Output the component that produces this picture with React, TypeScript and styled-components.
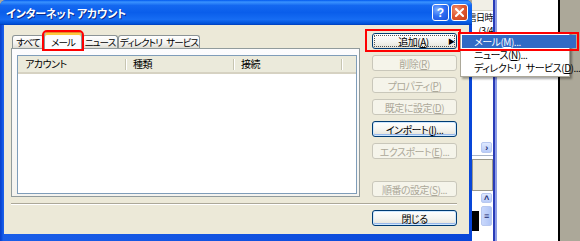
import React from "react";
import styled, { createGlobalStyle, css } from "styled-components";

const GlobalStyle = createGlobalStyle`
  html, body {
    margin: 0;
    padding: 0;
    background: #aca899;
  }
`;

const Screen = styled.div`
  position: relative;
  display: flex;
  width: 580px;
  height: 241px;
  overflow: hidden;
  font-family: "Noto Sans CJK JP", "Noto Sans", sans-serif;
  font-feature-settings: "palt";
  font-size: 10px;
  letter-spacing: -0.5px;
  word-spacing: 3px;
  color: #000;
`;

/* ---------- dialog frame ---------- */

const Dialog = styled.div`
  width: 472px;
  flex-shrink: 0;
  display: flex;
  flex-direction: column;
  background: linear-gradient(90deg, #0a3fc8 0, #0a4ee0 2px, #1a5ee8 3px, #0846d8 100%);
  border-radius: 6px 6px 0 0;
`;

const TitleBar = styled.div`
  height: 25px;
  display: flex;
  align-items: center;
  padding: 0 4px 0 6px;
  gap: 2px;
  border-radius: 6px 6px 0 0;
  background: linear-gradient(
    #0058ee 0%,
    #3a93ff 8%,
    #1468f0 22%,
    #0a5eeb 50%,
    #166cf3 78%,
    #0052d9 94%,
    #003cb8 100%
  );
`;

const Title = styled.div`
  flex: 1;
  color: #fff;
  font-weight: bold;
  font-size: 11px;
  letter-spacing: -0.2px;
  word-spacing: 0;
  text-shadow: 1px 1px 0 #0a2a8a;
  white-space: nowrap;
`;

const CaptionButton = styled.div<{ $close?: boolean }>`
  width: 15px;
  height: 15px;
  display: flex;
  align-items: center;
  justify-content: center;
  border: 1px solid #fff;
  border-radius: 3px;
  color: #fff;
  font-family: "Liberation Sans", sans-serif;
  font-weight: bold;
  font-size: 12px;
  letter-spacing: 0;
  background: ${(p) =>
    p.$close
      ? "radial-gradient(circle at 30% 30%, #f0926e 0, #e05a34 45%, #c83c14 100%)"
      : "radial-gradient(circle at 30% 30%, #7fb1ff 0, #2f6ff4 45%, #1a50d8 100%)"};
`;

const Client = styled.div`
  flex: 1;
  display: flex;
  flex-direction: column;
  margin: 0 3px 7px 4px;
  padding: 7px 12px 8px 7px;
  background: #ece9d8;
`;

const TopRow = styled.div`
  flex: 1;
  display: flex;
  gap: 12px;
`;

/* ---------- tabs ---------- */

const TabArea = styled.div`
  width: 349px;
  display: flex;
  flex-direction: column;
`;

const TabStrip = styled.div`
  height: 16px;
  display: flex;
  align-items: flex-end;
  padding-left: 1px;
`;

const Tab = styled.div<{ $w: number; $active?: boolean }>`
  flex: none;
  width: ${(p) => p.$w}px;
  box-sizing: border-box;
  height: 13px;
  display: flex;
  align-items: center;
  justify-content: center;
  font-size: 9.5px;
  letter-spacing: -0.9px;
  white-space: nowrap;
  border: 1px solid #8c9496;
  border-bottom: 0;
  border-radius: 3px 3px 0 0;
  background: linear-gradient(#ffffff, #f3f3f0 60%, #dedcd2);
  ${(p) =>
    p.$active &&
    css`
      height: 17px;
      margin-bottom: -1px;
      position: relative;
      z-index: 1;
      padding-top: 2px;
      background: #fcfcfe;
      border-top: 1px solid #e68b2c;
      box-shadow: inset 0 2px 0 #ffc83c;
      outline: 2px solid #f00;
    `}
`;

const Panel = styled.div`
  flex: 1;
  display: flex;
  border: 1px solid #919b9c;
  padding: 6px 2px 2px 5px;
  background: linear-gradient(#fcfcfe, #f4f3ee);
`;

const ListView = styled.div`
  flex: 1;
  display: flex;
  flex-direction: column;
  border: 1px solid #7f9db9;
  background: #fff;
`;

const ListHeader = styled.div`
  height: 16px;
  display: flex;
  background: #ebeadb;
  border-bottom: 2px solid #d6d2c2;
`;

const HeaderCell = styled.div<{ $w: number }>`
  position: relative;
  width: ${(p) => p.$w}px;
  box-sizing: border-box;
  padding-left: 7px;
  line-height: 16px;
  &::after {
    content: "";
    position: absolute;
    right: 0;
    top: 3px;
    bottom: 2px;
    width: 1px;
    background: #c7c5b2;
    box-shadow: 1px 0 0 #fff;
  }
`;

/* ---------- buttons ---------- */

const ButtonColumn = styled.div`
  width: 85px;
  display: flex;
  flex-direction: column;
  gap: 6px;
  padding-top: 1px;
`;

const Button = styled.div<{ $disabled?: boolean; $strong?: boolean }>`
  position: relative;
  height: 16px;
  box-sizing: border-box;
  display: flex;
  align-items: center;
  justify-content: center;
  white-space: nowrap;
  border: 1px solid #003c74;
  border-radius: 3px;
  background: linear-gradient(#ffffff, #f4f4f0 55%, #e4e1d6);
  ${(p) =>
    p.$strong &&
    css`
      box-shadow: inset 0 0 0 1px #cee7ff, inset 0 -1px 0 1px #98b8ea;
    `}
  ${(p) =>
    p.$disabled &&
    css`
      border-color: #c9c7ba;
      background: #f5f4ea;
      color: #aca899;
    `}
`;

const PushBottom = styled.div`
  margin-top: auto;
`;

const AddButton = styled(Button)`
  outline: 1px dotted #555;
  outline-offset: -3px;
  &::after {
    content: "";
    position: absolute;
    left: -8px;
    right: -5px;
    top: -5px;
    bottom: -4px;
    border: 2px solid #f00;
  }
`;

const ButtonLabel = styled.span`
  flex: 1;
  text-align: center;
  padding-left: 6px;
`;

const Arrow = styled.span`
  width: 8px;
  font-size: 7px;
`;

const Separator = styled.div`
  margin-top: 6px;
  border-top: 1px solid #aca899;
  border-bottom: 1px solid #fff;
`;

const BottomRow = styled.div`
  margin-top: 5px;
  display: flex;
  justify-content: flex-end;
  & > div {
    width: 85px;
  }
`;

/* ---------- background window ---------- */

const Backdrop = styled.div`
  flex: 1;
  display: flex;
`;

const ListPane = styled.div`
  width: 21px;
  display: flex;
  flex-direction: column;
  background: #fff;
  overflow: hidden;
`;

const HeaderStub = styled.div`
  height: 10px;
  background: #f1efe6;
  border-bottom: 1px solid #d6d2c2;
`;

const ClippedText = styled.div<{ $h: number }>`
  height: ${(p) => p.$h}px;
  display: flex;
  justify-content: flex-end;
  align-items: center;
  white-space: nowrap;
  font-size: 9px;
`;

const Spacer = styled.div`
  flex: 1;
`;

const MiniButton = styled.div<{ $h: number }>`
  width: 11px;
  height: ${(p) => p.$h}px;
  margin-left: 9px;
  border: 1px solid #b8c8f0;
  border-radius: 2px;
  background: linear-gradient(#dfe9ff, #b9ccf8);
  display: flex;
  align-items: center;
  justify-content: center;
  font-family: "Liberation Sans", sans-serif;
  font-weight: bold;
  font-size: 9px;
  color: #1a2a6c;
  box-sizing: border-box;
`;

const Rule = styled.div`
  margin-top: 2px;
  height: 1px;
  background: #a8b4c8;
`;

const GreyBox = styled.div`
  margin-top: 3px;
  height: 32px;
  box-sizing: border-box;
  border: 1px solid #9c9a8c;
  background: #ece9d8;
`;

const ScrollRow = styled.div`
  margin-top: 2px;
  height: 48px;
  display: flex;
  gap: 2px;
`;

const BlackBlock = styled.div`
  width: 7px;
  height: 20px;
  margin-top: 18px;
  background: #000;
`;

const ScrollColumn = styled.div`
  display: flex;
  flex-direction: column;
  gap: 3px;
  & > div {
    margin-left: 0;
  }
`;

const Thumb = styled(MiniButton)`
  height: 20px;
  background: linear-gradient(90deg, #c9d8fc, #b0c5f6);
`;

const BlueLine = styled.div`
  width: 4px;
  background: linear-gradient(90deg, #2a3cb8 0 2px, #8c9ce6 2px 4px);
`;

const WhitePane = styled.div`
  width: 61px;
  background: #fff;
`;

const BlackLine = styled.div`
  width: 2px;
  background: #000;
`;

const GreyPane = styled.div`
  flex: 1;
  background: #aca899;
`;

/* ---------- popup menu ---------- */

const Menu = styled.div`
  position: absolute;
  left: 460px;
  top: 32px;
  width: 110px;
  box-sizing: border-box;
  padding: 2px 0 2px 1px;
  background: #fff;
  border: 1px solid #aca899;
  box-shadow: 2px 2px 2px rgba(0, 0, 0, 0.35);
  display: flex;
  flex-direction: column;
  z-index: 5;
`;

const MenuItem = styled.div<{ $active?: boolean }>`
  position: relative;
  height: 13px;
  line-height: 13px;
  padding-left: 12px;
  white-space: nowrap;
  ${(p) =>
    p.$active &&
    css`
      margin-right: -7px;
      background: #316ac5;
      color: #fff;
      &::after {
        content: "";
        position: absolute;
        left: -4px;
        right: -3px;
        top: -3px;
        bottom: -3px;
        border: 2px solid #f00;
      }
    `}
`;

const CloseGlyph = () => (
  <svg width="9" height="9" viewBox="0 0 9 9">
    <path d="M1 1L8 8M8 1L1 8" stroke="#fff" strokeWidth="2" strokeLinecap="square" />
  </svg>
);

export default function App() {
  return (
    <>
      <GlobalStyle />
      <Screen>
        <Dialog>
          <TitleBar>
            <Title>インターネット アカウント</Title>
            <CaptionButton>?</CaptionButton>
            <CaptionButton $close>
              <CloseGlyph />
            </CaptionButton>
          </TitleBar>
          <Client>
            <TopRow>
              <TabArea>
                <TabStrip>
                  <Tab $w={32}>すべて</Tab>
                  <Tab $w={38} $active>
                    メール
                  </Tab>
                  <Tab $w={36}>ニュース</Tab>
                  <Tab $w={82}>ディレクトリ サービス</Tab>
                </TabStrip>
                <Panel>
                  <ListView>
                    <ListHeader>
                      <HeaderCell $w={108}>アカウント</HeaderCell>
                      <HeaderCell $w={108}>種類</HeaderCell>
                      <HeaderCell $w={108}>接続</HeaderCell>
                    </ListHeader>
                  </ListView>
                </Panel>
              </TabArea>
              <ButtonColumn>
                <AddButton>
                  <ButtonLabel>
                    追加(<u>A</u>)
                  </ButtonLabel>
                  <Arrow>▶</Arrow>
                </AddButton>
                <Button $disabled>
                  削除(<u>R</u>)
                </Button>
                <Button $disabled>
                  プロパティ(<u>P</u>)
                </Button>
                <Button $disabled>
                  既定に設定(<u>D</u>)
                </Button>
                <Button $strong>
                  インポート(<u>I</u>)...
                </Button>
                <Button $disabled>
                  エクスポート(<u>E</u>)...
                </Button>
                <PushBottom />
                <Button $disabled>
                  順番の設定(<u>S</u>)...
                </Button>
              </ButtonColumn>
            </TopRow>
            <Separator />
            <BottomRow>
              <Button $strong>閉じる</Button>
            </BottomRow>
          </Client>
        </Dialog>

        <Backdrop>
          <ListPane>
            <HeaderStub />
            <ClippedText $h={13}>受信日時</ClippedText>
            <ClippedText $h={12}>(3/4</ClippedText>
            <Spacer />
            <MiniButton $h={11}>›</MiniButton>
            <Rule />
            <GreyBox />
            <ScrollRow>
              <BlackBlock />
              <ScrollColumn>
                <MiniButton $h={10}>˄</MiniButton>
                <Thumb $h={20}>≡</Thumb>
              </ScrollColumn>
            </ScrollRow>
          </ListPane>
          <BlueLine />
          <WhitePane />
          <BlackLine />
          <GreyPane />
        </Backdrop>

        <Menu>
          <MenuItem $active>
            メール(<u>M</u>)...
          </MenuItem>
          <MenuItem>
            ニュース(<u>N</u>)...
          </MenuItem>
          <MenuItem>
            ディレクトリ サービス(<u>D</u>)...
          </MenuItem>
        </Menu>
      </Screen>
    </>
  );
}
